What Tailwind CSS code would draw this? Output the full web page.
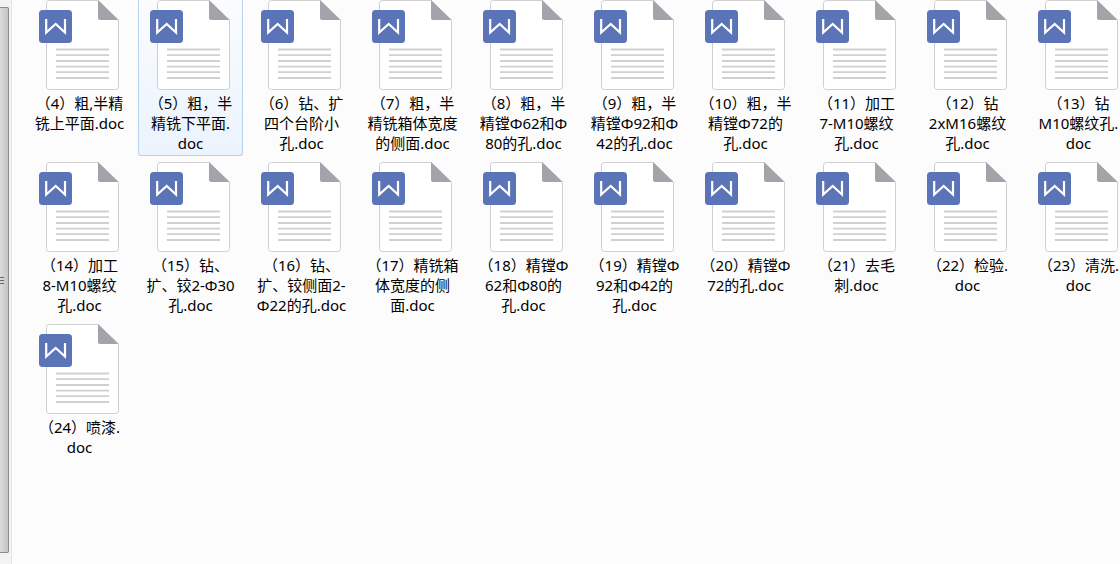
<!DOCTYPE html>
<html lang="zh-CN">
<head>
    <meta charset="UTF-8" />
    <meta name="viewport" content="width=device-width, initial-scale=1.0" />
    <title>工序文件</title>
    <script src="https://cdn.jsdelivr.net/npm/@tailwindcss/browser@4"></script>
</head>
<body class="h-screen flex overflow-hidden bg-[#fcfcfc] text-black font-['Noto_Sans','Noto_Sans_CJK_SC',sans-serif]">
    <!-- doc icon -->
    <svg class="hidden" aria-hidden="true">
        <symbol id="docIcon" viewBox="0 0 81 90">
            <path d="M10.5 .5H59L79.5 20V86.5a3 3 0 0 1-3 3H10.5a3 3 0 0 1-3-3V3.500a3 3 0 0 1 3-3Z" fill="#fff" stroke="#cfcfcf" />
            <path d="M59 0L79.5 20H61a2 2 0 0 1-2-2Z" fill="#a4a3aa" />
            <path d="M17 49.500H70M17 55.200H70M17 61H70M17 66.600H70M17 72.200H70M17 78H70" stroke="#d0d0d0" stroke-width="1.8" />
            <rect x="0" y="10" width="33" height="33" rx="3.5" fill="#5b73b7" />
            <path d="M7.2 19V32.600L16.700 24L26 32.600V19" fill="none" stroke="#fff" stroke-width="2.2" />
        </symbol>
    </svg>

    <!-- scrollbar of the folder pane -->
    <aside class="w-3 shrink-0 bg-[#f3f3f3] border-r border-[#e4e6ec] pt-[7px] pb-[11px] flex">
        <div class="w-[9px] flex flex-col justify-center gap-[2px] rounded-r-[2px] border-y border-r border-[#8c8c8c] bg-linear-to-r from-[#dcdcdc] to-[#c4c4c4]">
            <span class="w-1 h-px bg-[#666]"></span>
            <span class="w-1 h-px bg-[#666]"></span>
            <span class="w-1 h-px bg-[#666]"></span>
        </div>
    </aside>

    <!-- files -->
    <main id="fileGrid" class="flex-1 overflow-hidden pl-[15px] grid grid-cols-[repeat(10,105px)] auto-rows-[156px] content-start gap-[6px]"></main>

    <script>
        const files = [
            ["（4）粗,半精", "铣上平面.doc"],
            ["（5）粗，半", "精铣下平面.", "doc"],
            ["（6）钻、扩", "四个台阶小", "孔.doc"],
            ["（7）粗，半", "精铣箱体宽度", "的侧面.doc"],
            ["（8）粗，半", "精镗Φ62和Φ", "80的孔.doc"],
            ["（9）粗，半", "精镗Φ92和Φ", "42的孔.doc"],
            ["（10）粗，半", "精镗Φ72的", "孔.doc"],
            ["（11）加工", "7-M10螺纹", "孔.doc"],
            ["（12）钻", "2xM16螺纹", "孔.doc"],
            ["（13）钻", "M10螺纹孔.", "doc"],
            ["（14）加工", "8-M10螺纹", "孔.doc"],
            ["（15）钻、", "扩、铰2-Φ30", "孔.doc"],
            ["（16）钻、", "扩、铰侧面2-", "Φ22的孔.doc"],
            ["（17）精铣箱", "体宽度的侧", "面.doc"],
            ["（18）精镗Φ", "62和Φ80的", "孔.doc"],
            ["（19）精镗Φ", "92和Φ42的", "孔.doc"],
            ["（20）精镗Φ", "72的孔.doc"],
            ["（21）去毛", "刺.doc"],
            ["（22）检验.", "doc"],
            ["（23）清洗.", "doc"],
            ["（24）喷漆.", "doc"],
        ];
        const selected = 1;

        const fileGrid = document.getElementById("fileGrid");

        files.forEach((lines, idx) => {
            const btn = document.createElement("button");
            btn.type = "button";
            btn.className = "flex flex-col items-center justify-start border-x border-b rounded-b-[3px] text-[15px] leading-5 whitespace-nowrap";
            if (idx === selected) {
                btn.classList.add("border-[#b9d3ee]", "bg-linear-to-b", "from-[#fafcfe]", "to-[#ebf3fd]");
            } else {
                btn.classList.add("border-transparent");
            }
            btn.innerHTML = `<svg class="w-[81px] h-[90px] mb-[3px] shrink-0" aria-hidden="true"><use href="#docIcon" /></svg><span>${lines.join("<br>")}</span>`;
            fileGrid.appendChild(btn);
        });
    </script>
</body>
</html>
